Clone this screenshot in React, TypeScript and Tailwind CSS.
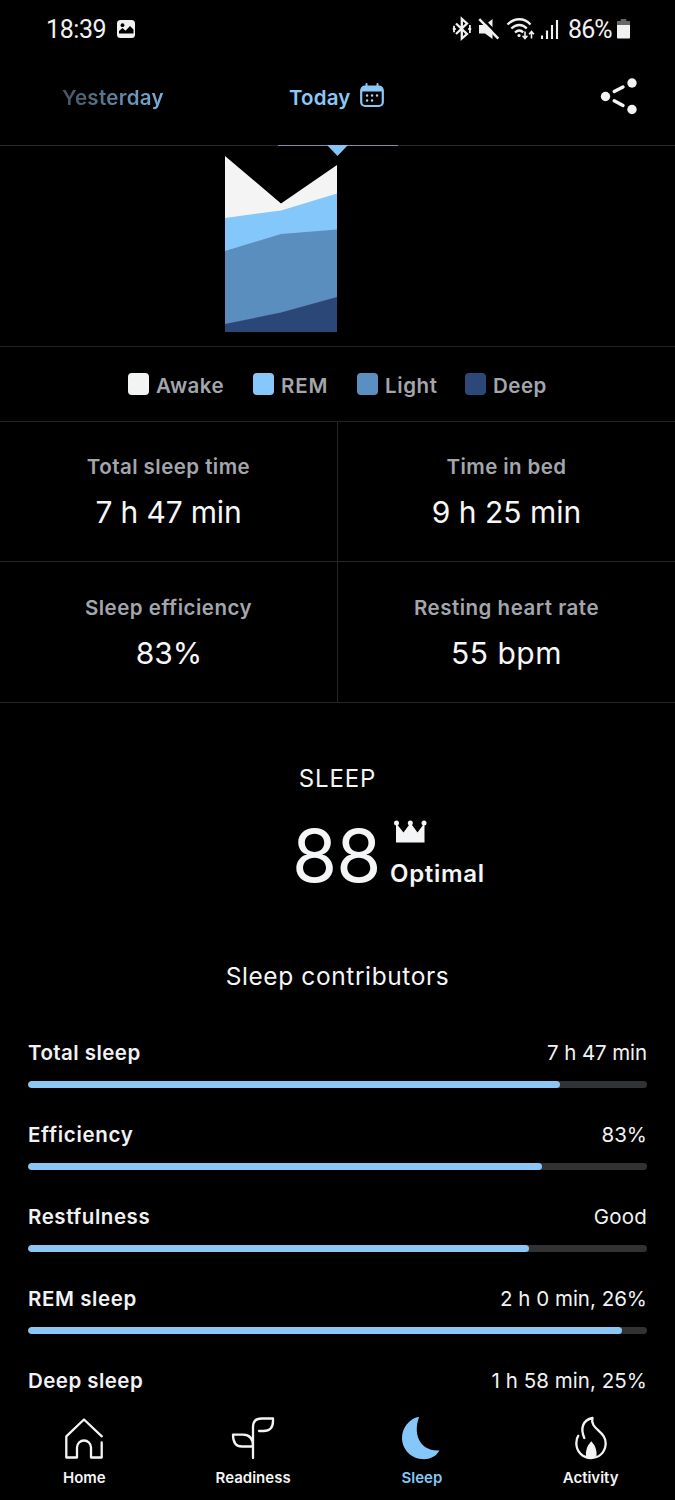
import type { ReactNode } from "react";

type Stat = { label: string; value: string; labelClass: string; valueClass: string };
type Contributor = { label: string; value: string; fill: number; labelClass: string; valueClass: string };

const legend = [
  { label: "Awake", swatch: "bg-[#f2f3f3]", box: "w-[125px]", text: "tracking-[0.45px]" },
  { label: "REM", swatch: "bg-[#86c8fb]", box: "w-[104px]", text: "tracking-[0.9px]" },
  { label: "Light", swatch: "bg-[#5b8fc1]", box: "w-[108px]", text: "tracking-[0.6px]" },
  { label: "Deep", swatch: "bg-[#2b4878]", box: "w-[84px]", text: "tracking-[0.5px]" },
];

const stats: Stat[] = [
  { label: "Total sleep time", value: "7 h 47 min", labelClass: "tracking-[0.45px]", valueClass: "tracking-[-0.15px]" },
  { label: "Time in bed", value: "9 h 25 min", labelClass: "tracking-[0.4px]", valueClass: "tracking-[0px]" },
  { label: "Sleep efficiency", value: "83%", labelClass: "tracking-[0.5px]", valueClass: "pl-[1px]" },
  { label: "Resting heart rate", value: "55 bpm", labelClass: "tracking-[0.5px]", valueClass: "tracking-[0.5px]" },
];

const contributors: Contributor[] = [
  { label: "Total sleep", value: "7 h 47 min", fill: 532, labelClass: "tracking-[0.45px]", valueClass: "tracking-[-0.1px]" },
  { label: "Efficiency", value: "83%", fill: 514, labelClass: "tracking-[0.7px]", valueClass: "tracking-[0px]" },
  { label: "Restfulness", value: "Good", fill: 501, labelClass: "tracking-[0.55px]", valueClass: "tracking-[0.2px]" },
  { label: "REM sleep", value: "2 h 0 min, 26%", fill: 594, labelClass: "tracking-[0.6px]", valueClass: "tracking-[0px]" },
  { label: "Deep sleep", value: "1 h 58 min, 25%", fill: 590, labelClass: "tracking-[0.45px]", valueClass: "tracking-[0.05px]" },
];

function StatusBar() {
  return (
    <div className="flex h-[58px] shrink-0 items-center pl-[46px] font-['Roboto',sans-serif] text-[25px] leading-[58px] text-[#f1f1f1]">
      <span className="w-[70px] pt-[2px] tracking-[-0.4px]">18:39</span>
      <svg className="h-[20px] w-[20px]" viewBox="0 0 20 20">
        <rect x="1" y="1" width="18" height="18" rx="3.5" fill="#f1f1f1" />
        <circle cx="6.5" cy="6.2" r="1.9" fill="#000" />
        <path d="M3 14.5V12l3.5-3 3 2.7L14 7l3.5 3.500v4z" fill="#000" />
      </svg>
      <svg className="ml-[315px] h-[26px] w-[109px]" viewBox="0 0 109 26" fill="none" stroke="#f1f1f1">
        <path d="m5 7.5 11 10.5-5.2 4.5V2.8L16 7.5 5 18" strokeWidth="2.3" />
        <path d="M3 9.800v6.400M1.800 13h3M18.900 9v8M17.200 13h3" strokeWidth="1.800" />
        <path d="M28 9h6l7.500-6v20l-7.500-5.500h-6z" fill="#f1f1f1" stroke="none" />
        <path d="M29.500 .8 50 21.600" stroke="#000" strokeWidth="2.600" />
        <path d="m28.300 3.200 19 19.500" strokeWidth="2.500" />
        <path d="M56.500 8.500c7-7 17-7 23 0M60.300 12.500c5-4.700 11.200-4.700 15.500 0M64 16.500c2.800-2.700 6-2.700 8.200 0" strokeWidth="2.300" />
        <circle cx="68" cy="19.500" r="1.600" fill="#f1f1f1" stroke="none" />
        <path d="M74 15.500v7m-2.400-2.700 2.400 2.700 2.400-2.700M80.500 22.500v-7m-2.400 2.700 2.400-2.700 2.400 2.700" strokeWidth="1.600" />
        <path d="M91 19.500v3.500M96 14.500V23M101 9v14M106 4v19" strokeWidth="2.100" />
      </svg>
      <span className="ml-[8px] w-[49px] whitespace-nowrap pt-[1px] tracking-[-0.9px]">86%</span>
      <svg className="h-[20px] w-[13px]" viewBox="0 0 14 20" preserveAspectRatio="none">
        <path d="M4 0h6v2h4v5H0V2h4z" fill="#666" />
        <path d="M0 6h14v12.500q0 1-1 1H1q-1 0-1-1z" fill="#f1f1f1" />
      </svg>
    </div>
  );
}

function Header() {
  return (
    <header className="relative flex h-[88px] shrink-0 items-start border-b border-[#262829] text-[20.5px] font-semibold leading-[40px]">
      <span className="ml-[62px] mt-[20px] w-[227px] bg-gradient-to-r from-[#425361] from-0% to-[#80bdec] to-50% bg-clip-text tracking-[0.3px] text-transparent">
        Yesterday
      </span>
      <span className="mt-[20px] w-[70px] tracking-[0.15px] text-[#8ac8f8]">Today</span>
      <svg className="mt-[25px] h-[26px] w-[26px]" viewBox="0 0 26 26" fill="none">
        <rect x="2.200" y="3.500" width="21.600" height="19.500" rx="4" stroke="#8ac8f8" strokeWidth="2.200" />
        <path d="M2 8.500V7q0-4 4-4h14q4 0 4 4v1.500z" fill="#8ac8f8" />
        <path d="M7.500 1v4M18.500 1v4" stroke="#8ac8f8" strokeWidth="2" strokeLinecap="round" />
        <path d="M8 12.500h.1M13 12.500h.1M18 12.500h.1M8 17.500h.1M13 17.500h.1" stroke="#a5d3f8" strokeWidth="2.400" strokeLinecap="round" />
      </svg>
      <svg className="ml-[214px] mt-[18px] h-[40px] w-[40px]" viewBox="0 0 40 40" fill="#f4f4f4">
        <circle cx="6.500" cy="20.500" r="4.700" />
        <circle cx="33" cy="7" r="4.700" />
        <circle cx="33" cy="33.500" r="4.700" />
        <path d="m15.200 15.500 8.800-4.500M15.200 24.800l8.800 4.700" stroke="#f4f4f4" strokeWidth="3.400" strokeLinecap="round" />
      </svg>
      <div className="absolute -bottom-px left-[278px] h-px w-[120px] bg-[#7891a9]" />
      <svg className="absolute left-[327px] top-[87px] h-[12px] w-[22px]" viewBox="0 0 22 12">
        <path d="M0 0h21L10.500 11z" fill="#86c5f6" />
      </svg>
    </header>
  );
}

function SleepChart() {
  return (
    <div className="h-[201px] shrink-0 border-b border-[#1f2122]">
      <svg className="h-[200px] w-full" viewBox="0 0 675 200">
        <path d="M225 10 281 57.500 337 19v167H225z" fill="#f3f4f3" />
        <path d="M225 72 281 64.500 337 47.500V186H225z" fill="#84c7fb" />
        <path d="M225 105 281 88 337 83.500V186H225z" fill="#5a8ebf" />
        <path d="M225 178 281 166.500 337 151V186H225z" fill="#2b4778" />
      </svg>
    </div>
  );
}

function Legend() {
  return (
    <div className="flex h-[75px] shrink-0 border-b border-[#242627] pl-[128px] text-[20.5px] font-semibold leading-[26px] text-[#a3a6ad]">
      {legend.map((item) => (
        <div key={item.label} className={`flex pt-[26px] ${item.box}`}>
          <span className={`mr-[7px] h-[22px] w-[21px] shrink-0 rounded-[4px] ${item.swatch}`} />
          <span className={item.text}>{item.label}</span>
        </div>
      ))}
    </div>
  );
}

function Stats() {
  return (
    <div className="grid shrink-0 grid-cols-[338px_337px] text-center">
      {stats.map((s, i) => (
        <div key={s.label} className={`border-b border-[#242627] ${i % 2 === 0 ? "border-r" : ""} ${i < 2 ? "h-[140px] pt-[30px]" : "h-[141px] pt-[31px]"}`}>
          <div className={`text-[20.5px] font-semibold leading-[30px] text-[#a3a6ad] ${s.labelClass}`}>{s.label}</div>
          <div className={`mt-[10px] text-[30px] leading-[40px] text-[#f7f7f7] ${s.valueClass}`}>{s.value}</div>
        </div>
      ))}
    </div>
  );
}

function Score() {
  return (
    <section className="h-[335px] shrink-0 pt-[61px] text-[#f4f5f6]">
      <h2 className="text-center text-[24px] leading-[30px] tracking-[0.9px]">SLEEP</h2>
      <div className="flex pl-[292px] pt-[20px]">
        <span className="w-[98px] text-[73px] leading-[84px] tracking-[-1px]">88</span>
        <div className="flex flex-col">
          <svg className="ml-[4px] mt-[6px] h-[24px] w-[33px]" viewBox="0 0 33 24" fill="#f4f5f6">
            <path d="M2 22.500V3l7.500 9.500L16.500 3l7 9.500L30.500 3v19.500z" />
            <circle cx="2.500" cy="3" r="2.500" />
            <circle cx="16.300" cy="3" r="2.500" />
            <circle cx="30" cy="3" r="2.500" />
          </svg>
          <span className="mt-[15px] text-[24px] font-semibold leading-[30px] tracking-[0.7px]">Optimal</span>
        </div>
      </div>
      <h2 className="mt-[62px] text-center text-[24.5px] leading-[32px] tracking-[0.6px]">Sleep contributors</h2>
    </section>
  );
}

function Contributors() {
  return (
    <section className="h-[359px] shrink-0 overflow-hidden pl-[28px] pr-[28px] text-[#f1f2f3]">
      {contributors.map((c) => (
        <div key={c.label} className="h-[82px]">
          <div className="flex justify-between text-[20.5px] leading-[30px]">
            <span className={`font-semibold ${c.labelClass}`}>{c.label}</span>
            <span className={c.valueClass}>{c.value}</span>
          </div>
          <div className="mt-[13px] h-[7px] overflow-hidden rounded-full bg-[#303234]">
            <div className="h-full rounded-full bg-[#8ac7f4]" style={{ width: c.fill }} />
          </div>
        </div>
      ))}
    </section>
  );
}

function NavItem({ label, active, children }: { label: string; active?: boolean; children: ReactNode }) {
  return (
    <div className={`flex flex-1 flex-col items-center ${active ? "text-[#85c7f8]" : "text-[#f4f4f4]"}`}>
      <svg className="h-[52px] w-[44px]" viewBox="0 0 44 52" fill="none" stroke="currentColor" strokeWidth="2.300" strokeLinecap="round" strokeLinejoin="round">
        {children}
      </svg>
      <span className="mt-[7px] text-[15px] font-semibold leading-[20px]">{label}</span>
    </div>
  );
}

function BottomNav() {
  return (
    <nav className="flex h-[104px] shrink-0 pt-[12px]">
      <NavItem label="Home">
        <path d="M39.800 27.300 22 10.500 4.300 27.300V48.500H15V38.500a7 7 0 0 1 14 0v10H39.700V33.500" />
      </NavItem>
      <NavItem label="Readiness">
        <path d="M22 49V18q0-8.500 8.500-8.500H42V12q0 10-9.500 10H28M22 37.500q0-11.800-10-11.800H2q0 11.800 9 11.800H22" />
      </NavItem>
      <NavItem label="Sleep" active>
        <path d="M19 8.500C13.500 22 17.500 42.500 39.500 41.500 36 47.500 30 50.200 24 50.200 11 50.200 2 40 2 29 2 19 9 10 18 8q1.200-.2 1 .5z" fill="currentColor" stroke="none" />
      </NavItem>
      <NavItem label="Activity">
        <path d="M15.300 29C11 19 14 11 23.500 9 20.500 20 37 22 36.700 34.500 36.300 44.500 29 49 22 49 14 49 7.300 43 7.300 34Q7.300 29.500 9.300 26.800" />
        <path d="M22.300 32.200q-6.500 6.800-5.300 15 5.300 3.500 10.500 0 1-8.500-5.200-15z" fill="currentColor" stroke="none" />
      </NavItem>
    </nav>
  );
}

export default function App() {
  return (
    <main className="flex h-[1500px] w-[675px] flex-col overflow-hidden bg-black font-['Inter',sans-serif]">
      <StatusBar />
      <Header />
      <SleepChart />
      <Legend />
      <Stats />
      <Score />
      <Contributors />
      <BottomNav />
    </main>
  );
}
